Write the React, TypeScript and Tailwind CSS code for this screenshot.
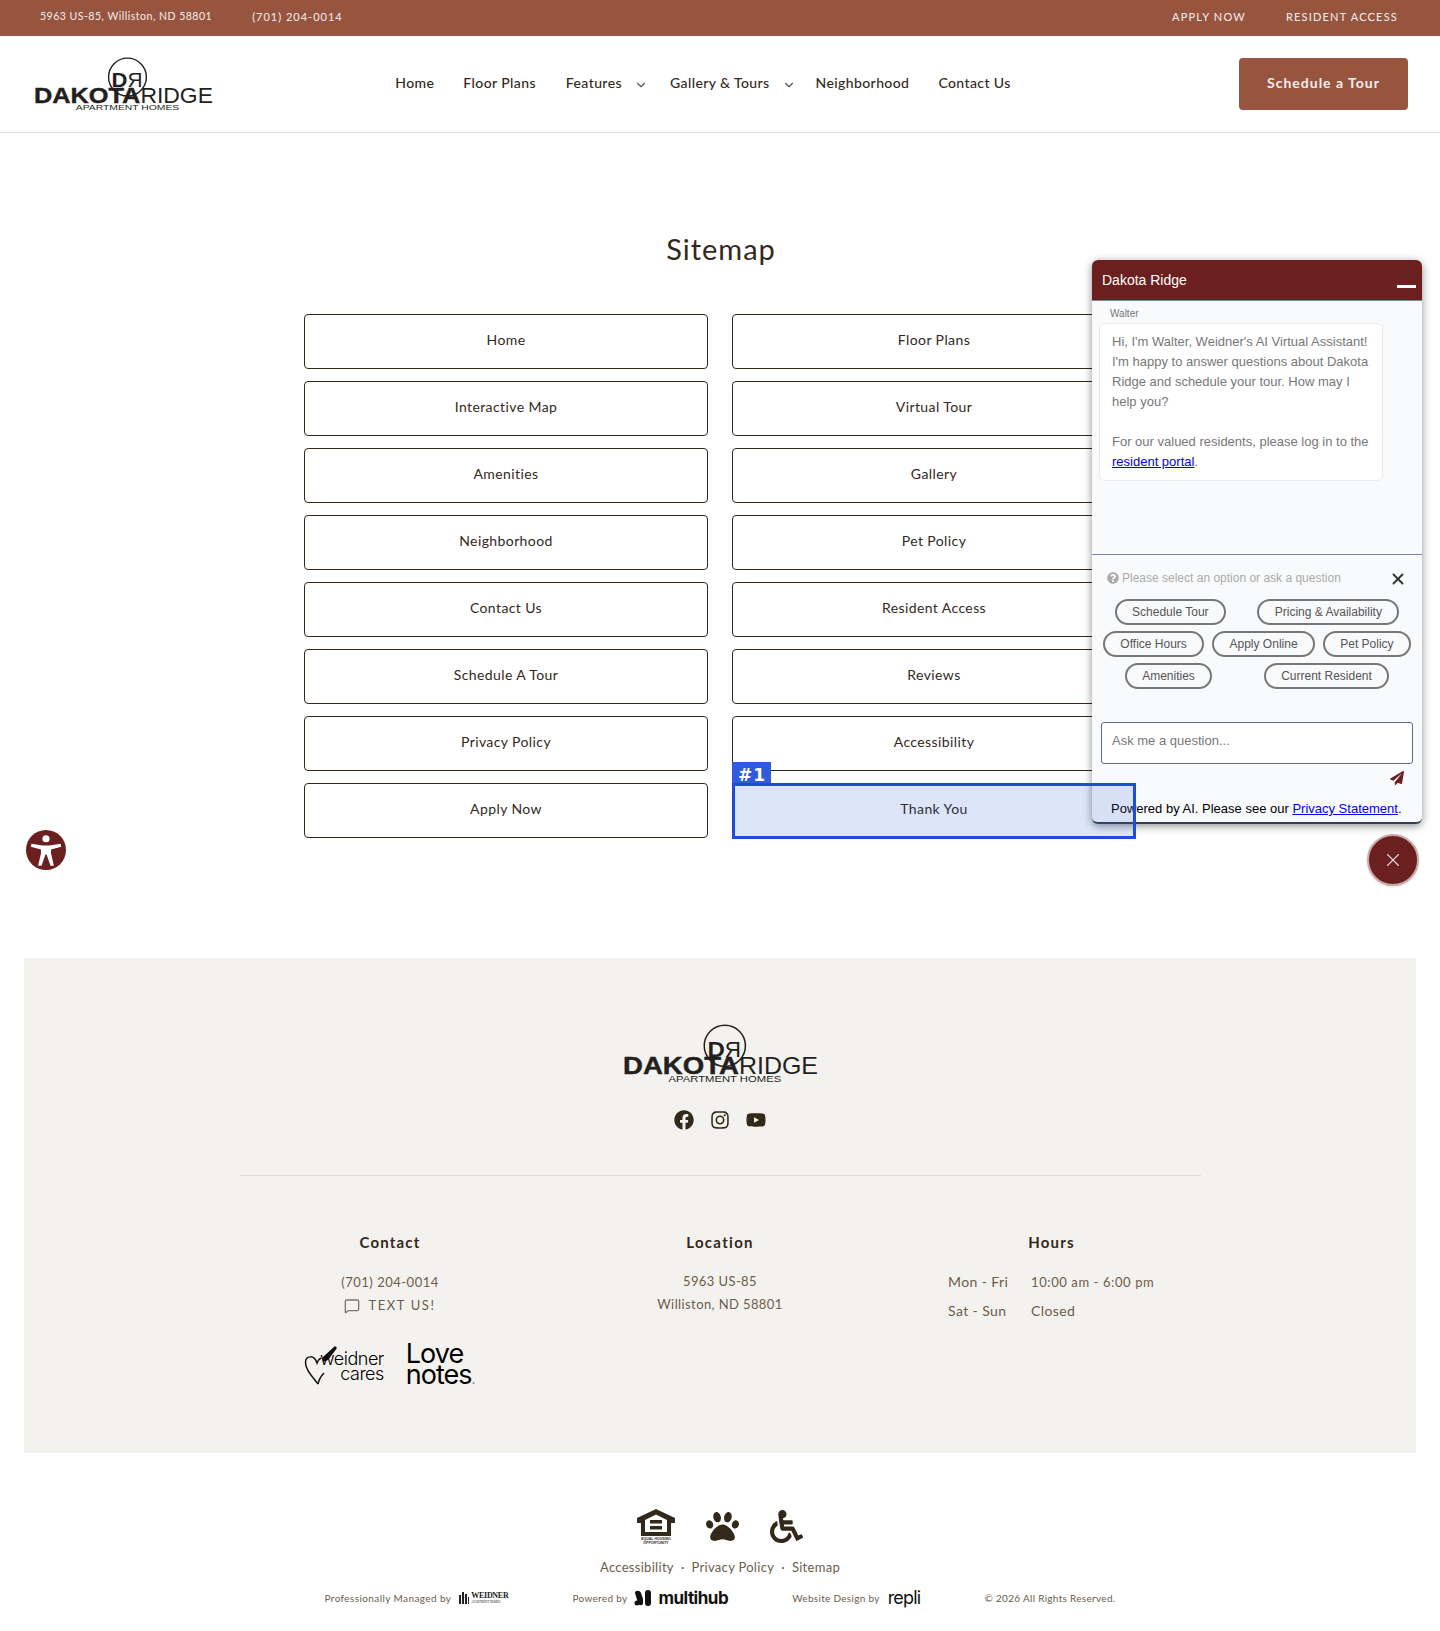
import React from 'react';
import { ChevronDown, MessageSquare, X } from 'lucide-react';
import { FaFacebook, FaInstagram, FaYoutube, FaPaw, FaWheelchair, FaPaperPlane, FaQuestionCircle } from 'react-icons/fa';

const left = ['Home', 'Interactive Map', 'Amenities', 'Neighborhood', 'Contact Us', 'Schedule A Tour', 'Privacy Policy', 'Apply Now'];
const right = ['Floor Plans', 'Virtual Tour', 'Gallery', 'Pet Policy', 'Resident Access', 'Reviews', 'Accessibility', 'Thank You'];
const pills = ['Schedule Tour', 'Pricing & Availability', 'Office Hours', 'Apply Online', 'Pet Policy', 'Amenities', 'Current Resident'];

const Logo = ({ className }: { className: string }) => (
  <svg viewBox="0 0 180 56" className={className} fill="#231f20">
    <circle cx="94" cy="20" r="19" fill="none" stroke="#231f20" strokeWidth="1.4" />
    <text x="78" y="30" fontFamily="Liberation Sans" fontWeight="700" fontSize="20" textLength="16" lengthAdjust="spacingAndGlyphs">D</text>
    <text x="-109" y="30" fontFamily="Liberation Sans" fontSize="20" textLength="15" lengthAdjust="spacingAndGlyphs" transform="scale(-1 1)">R</text>
    <text x="0" y="46" fontFamily="Liberation Sans" fontWeight="700" fontSize="22" stroke="#231f20" strokeWidth="0.4" textLength="107" lengthAdjust="spacingAndGlyphs">DAKOTA</text>
    <text x="107" y="46" fontFamily="Liberation Sans" fontSize="22" textLength="73" lengthAdjust="spacingAndGlyphs">RIDGE</text>
    <text x="42" y="53" fontFamily="Liberation Sans" fontSize="8" textLength="104" lengthAdjust="spacingAndGlyphs">APARTMENT HOMES</text>
  </svg>
);

const Heart = () => (
  <svg viewBox="0 0 34 42" className="w-[34px] h-[42px]" fill="none" stroke="#111" strokeWidth="1.5">
    <path d="M14 39C8 31 1 24 1.500 17C2 11 10 9 13 18C14 15 15 14 17 13" />
    <path d="M14 39C15 34 17 31 20 28" />
    <path d="M19 12L31 1L33 3L24 15L19 17Z" fill="#111" stroke="none" />
  </svg>
);

const HousingIcon = () => (
  <svg viewBox="0 0 38 36" className="w-[38px] h-[36px]" fill="#33291b">
    <path d="M19 1L38 10V15H34V28H4V15H0V10ZM8 12V24H30V12L19 6.500Z" fillRule="evenodd" />
    <rect x="13" y="12" width="12" height="3.500" />
    <rect x="13" y="18" width="12" height="3.500" />
    <text x="19" y="32" textAnchor="middle" fontSize="3.500" fontWeight="700" fontFamily="Liberation Sans">EQUAL HOUSING</text>
    <text x="19" y="36" textAnchor="middle" fontSize="3.500" fontWeight="700" fontFamily="Liberation Sans">OPPORTUNITY</text>
  </svg>
);

const ChatPanel = () => (
  <div className="absolute left-[1092px] top-[260px] w-[330px] h-[564px] rounded-md bg-[#f9fafc] shadow-[0_2px_8px_rgba(0,0,0,0.45)] border-b-2 border-[#34405a] font-['Liberation_Sans',sans-serif] flex flex-col overflow-hidden">
    <div className="h-[41px] bg-[#6b1f1f] text-white text-sm flex items-center justify-between pl-2.5 pr-1.5 border-b border-[#7a86a8] shrink-0">
      <span>Dakota Ridge</span>
      <span className="w-[19px] h-[3px] bg-white mt-3" />
    </div>
    <div className="h-[254px] border-b border-[#7a86a8] px-[7px] shrink-0">
      <div className="text-[10px] leading-[12px] text-[#777] mt-[7px] ml-[11px]">Walter</div>
      <div className="mt-[3px] w-[284px] h-[158px] bg-white border border-[#e8eaee] rounded-md pl-3 pr-2 pt-2 text-[13px] leading-5 text-[#777]">
        Hi, I'm Walter, Weidner's AI Virtual Assistant! I'm happy to answer questions about Dakota Ridge and schedule your tour. How may I help you?
        <br />
        <br />
        For our valued residents, please log in to the <a className="text-[#0000ee] underline">resident portal</a>.
      </div>
    </div>
    <div className="flex items-center justify-between px-[15px] mt-4 h-[14px] text-xs text-[#aaa]">
      <span className="flex items-center gap-[3px]"><FaQuestionCircle className="w-3 h-3 text-[#aaa]" />Please select an option or ask a question</span>
      <X className="w-[18px] h-[18px] text-[#333] mt-0.5" strokeWidth={2.5} />
    </div>
    <div className="flex flex-wrap justify-around gap-y-1.5 mt-3.5 px-[7px]">
      {pills.map(p => (
        <span key={p} className="h-[26px] px-[15.5px] border-2 border-[#777] rounded-full text-xs leading-[22px] text-[#555]">{p}</span>
      ))}
    </div>
    <div className="mx-[9px] mt-[33px] h-[42px] border border-[#5f6b8a] rounded-[3px] bg-white text-[13px] text-[#777] pl-2.5 pt-2">Ask me a question...</div>
    <div className="flex justify-end pr-[18px] mt-[7px]">
      <FaPaperPlane className="w-[14px] h-[14px] text-[#6b1f1f]" />
    </div>
    <div className="mt-4 pl-[19px] text-[13px] leading-[15px] text-black">
      Powered by AI. Please see our <a className="text-[#0000ee] underline">Privacy Statement</a>.
    </div>
  </div>
);

export default function App() {
  return (
    <div className="relative w-[1440px] h-[1631px] overflow-hidden bg-white text-[#33291b] font-['Lato',sans-serif]">
      <div className="h-9 bg-[#97543f] text-white/90 flex items-center justify-between pl-10 pr-[42px] pb-[2px] text-[10.5px] tracking-[0.5px]">
        <div className="flex items-center gap-10">
          <span>5963 US-85, Williston, ND 58801</span>
          <span className="text-[11px] tracking-[1px]">(701) 204-0014</span>
        </div>
        <div className="flex items-center gap-10 text-[11px] tracking-[1.2px]">
          <span>APPLY NOW</span>
          <span>RESIDENT ACCESS</span>
        </div>
      </div>

      <header className="h-[97px] border-b border-[#e4e1db] flex items-center justify-between pl-[34px] pr-8">
        <Logo className="w-[179px] h-[56px] mt-[2px]" />
        <nav className="flex items-center text-sm font-medium tracking-[0.4px] -mt-[2px] -ml-[46px]">
          <span className="mr-[29px]">Home</span>
          <span className="mr-[30px]">Floor Plans</span>
          <span className="flex items-center mr-[22px]">Features<ChevronDown className="w-3.5 h-3.5 ml-3 mt-1 text-[#555]" /></span>
          <span className="flex items-center mr-5">Gallery &amp; Tours<ChevronDown className="w-3.5 h-3.5 ml-3 mt-1 text-[#555]" /></span>
          <span className="mr-[29px]">Neighborhood</span>
          <span>Contact Us</span>
        </nav>
        <button className="w-[169px] h-[52px] bg-[#97543f] rounded-sm text-white/90 text-sm font-bold tracking-[1px] pb-0.5">Schedule a Tour</button>
      </header>

      <main className="pt-[98px]">
        <h1 className="text-center text-[29px] leading-9 tracking-[1px] font-normal pl-[2px]">Sitemap</h1>
        <div className="ml-[304px] mt-[47px] w-[832px] grid grid-cols-2 gap-x-6 gap-y-3">
          {left.map((l, i) => (
            <React.Fragment key={l}>
              <a className="h-[55px] pb-[3px] border border-[#33291b] rounded flex items-center justify-center text-sm tracking-[0.4px]">{l}</a>
              <a className="h-[55px] pb-[3px] border border-[#33291b] rounded flex items-center justify-center text-sm tracking-[0.4px]">{right[i]}</a>
            </React.Fragment>
          ))}
        </div>
      </main>

      <section className="mx-6 mt-[120px] h-[495px] bg-[#f4f2ef] flex flex-col items-center pt-[66px]">
        <Logo className="w-[195px] h-[61px]" />
        <div className="flex items-center gap-4 mt-[25px]">
          <FaFacebook className="w-5 h-5" />
          <FaInstagram className="w-5 h-5" />
          <FaYoutube className="w-5 h-5" />
        </div>
        <div className="w-[961px] h-px bg-[#dfdcd6] mt-[45px]" />
        <div className="w-[851px] ml-[19px] mt-14 grid grid-cols-[172px_1fr_207px]">
          <div className="flex flex-col items-center">
            <h3 className="text-[15px] leading-5 font-bold tracking-[1.2px]">Contact</h3>
            <div className="mt-5 text-[13px] leading-5 tracking-[0.5px] text-[#6b5d4b]">(701) 204-0014</div>
            <div className="mt-[3px] flex items-center gap-2 text-[13px] leading-5 tracking-[1.6px] text-[#6b5d4b]"><MessageSquare className="w-4 h-4 mt-0.5 text-[#777]" />TEXT US!</div>
            <div className="mt-7 flex items-center gap-[22px] text-black w-full">
              <div className="flex items-center">
                <Heart />
                <div className="-ml-[18px] leading-[15px] text-right font-['Inter',sans-serif] font-light text-lg tracking-[-0.5px]">
                  <div>weidner</div>
                  <div>cares</div>
                </div>
              </div>
              <div className="font-['Inter',sans-serif] text-[27px] leading-[21px] tracking-[-1px]">
                <div>Love</div>
                <div>notes<span className="text-[#777] text-sm">.</span></div>
              </div>
            </div>
          </div>
          <div className="flex flex-col items-center pl-4">
            <h3 className="text-[15px] leading-5 font-bold tracking-[1.3px]">Location</h3>
            <div className="mt-[18px] text-[13px] leading-[23px] tracking-[0.4px] text-[#6b5d4b] text-center">5963 US-85<br />Williston, ND 58801</div>
          </div>
          <div className="flex flex-col">
            <h3 className="text-[15px] leading-5 font-bold tracking-[1.2px] text-center">Hours</h3>
            <div className="mt-5 text-sm leading-5 tracking-[0.4px] text-[#6b5d4b] grid grid-cols-[83px_1fr] gap-y-[9px] whitespace-nowrap">
              <span>Mon - Fri</span><span className="text-[13px] tracking-[0.6px]">10:00 am - 6:00 pm</span>
              <span>Sat - Sun</span><span>Closed</span>
            </div>
          </div>
        </div>
      </section>

      <footer className="flex flex-col items-center pt-[55px]">
        <div className="flex items-center gap-[31px] h-9">
          <HousingIcon />
          <FaPaw className="w-[33px] h-[33px]" />
          <FaWheelchair className="w-[33px] h-[33px]" />
        </div>
        <div className="mt-[15px] flex items-center gap-[7px] text-[13px] leading-4 tracking-[0.3px] text-[#6b5d4b]">
          <span>Accessibility</span><span>·</span><span>Privacy Policy</span><span>·</span><span>Sitemap</span>
        </div>
        <div className="mt-[13px] w-[791px] flex items-center justify-between text-[10px] tracking-[0.3px] text-[#6b5d4b] h-5">
          <span className="flex items-center gap-2 tracking-[0.4px]">Professionally Managed by
            <span className="flex items-center gap-[2px]">
              <svg viewBox="0 0 10 12" className="w-[10px] h-3" fill="#222"><path d="M0 3H2V12H0ZM3 0H5V12H3ZM6 2H8V12H6ZM9 5H10V12H9Z" /></svg>
              <span className="font-['Liberation_Serif',serif] font-bold text-[8px] leading-[8px] text-[#222] tracking-[-0.3px]">WEIDNER<span className="block text-[3px] leading-[4px] font-normal tracking-normal">APARTMENT HOMES</span></span>
            </span>
          </span>
          <span className="flex items-center gap-[7px]">Powered by
            <span className="flex items-center gap-[6px]">
              <svg viewBox="0 0 18 16" className="w-[18px] h-4" fill="#111"><path d="M1 3C1 0 6 0 7 3L9 9V13C9 16 5 16 4 13Z" /><rect x="11" y="0" width="6" height="16" rx="3" /><circle cx="3" cy="13" r="2.500" /></svg>
              <span className="font-['Inter',sans-serif] font-bold text-[17px] text-[#111] tracking-[-0.5px] leading-5">multihub</span>
            </span>
          </span>
          <span className="flex items-center gap-2">Website Design by <span className="font-['Inter',sans-serif] text-[18px] text-[#111] tracking-[-0.8px] leading-5">repli</span></span>
          <span>© 2026 All Rights Reserved.</span>
        </div>
      </footer>

      <ChatPanel />

      <div className="absolute left-[732px] top-[783px] w-[404px] h-[56px] border-[3px] border-[#1d4ed8] bg-[#1d4ed8]/15" />
      <div className="absolute left-[732px] top-[762px] w-[39px] h-[21px] bg-[#2f5bdc] text-white text-[17px] leading-[26px] font-bold tracking-[1px] pl-1.5 font-['DejaVu_Sans',sans-serif]">#1</div>

      <div className="absolute left-[1367px] top-[834px] w-[52px] h-[52px] rounded-full bg-[#6b1f1f] border-2 border-[#c9a9a9] shadow flex items-center justify-center">
        <X className="w-[22px] h-[22px] text-[#e8d8d8]" strokeWidth={1.25} />
      </div>

      <div className="absolute left-[26px] top-[830px] w-10 h-10 rounded-full bg-[#6b1f1f] flex items-center justify-center">
        <svg viewBox="0 0 32 32" className="w-9 h-9" fill="#fff">
          <circle cx="16" cy="6" r="3.200" />
          <path d="M3 10.500L13 12H19L29 10.500L29.500 13L20.500 15.500V19L23 30H20L16.500 20H15.500L12 30H9L11.500 19V15.500L2.500 13Z" />
        </svg>
      </div>
    </div>
  );
}
